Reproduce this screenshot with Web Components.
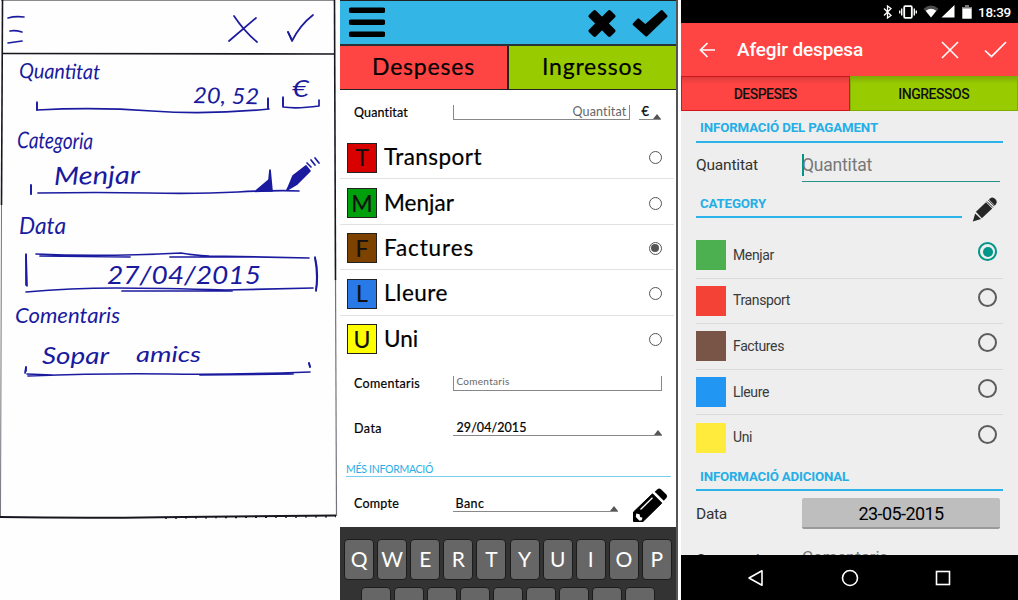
<!DOCTYPE html>
<html lang="ca"><head><meta charset="utf-8"><title>Afegir despesa</title>
<style>
body{margin:0;width:1018px;height:600px;overflow:hidden;background:#fff}
main{display:grid;grid-template-columns:340px 338px 3px 337px;height:600px}
app-screen{grid-column:4}
</style></head><body>
<main><sketch-screen></sketch-screen><mockup-screen></mockup-screen><app-screen></app-screen></main>
<script>
const define=(name,html)=>customElements.define(name,class extends HTMLElement{
  constructor(){super();this.attachShadow({mode:'open'}).innerHTML=typeof html==='string'?html:''}
  connectedCallback(){if(typeof html==='function')this.shadowRoot.innerHTML=html(this)}
});

/* Text label; "w" spreads the letters over a given width */
customElements.define('fit-label',class extends HTMLElement{
  constructor(){super();this.attachShadow({mode:'open'}).innerHTML='<style>:host{display:block;white-space:nowrap;flex:none;line-height:1.2}span{display:inline-block}</style><span><slot></slot></span>'}
  connectedCallback(){
    const s=this.shadowRoot.querySelector('span'),a=n=>this.getAttribute(n);
    if(a('size'))this.style.fontSize=a('size')+'px';
    if(a('w')){const w=+a('w');this.style.width=w+'px';const n=this.textContent.length;
      s.style.letterSpacing=((w-s.getBoundingClientRect().width)/n)+'px'}
  }
});

const icons={
 menu:[36,31,'<path d="M2 3h32M2 15h32M2 27h32" stroke="currentColor" stroke-width="5.4" stroke-linecap="round" transform="translate(0 .3)"/>'],
 bigx:[28,29,'<g fill="currentColor" transform="translate(14 14.500)"><rect x="-15.300" y="-4.900" width="30.600" height="9.800" rx="2" transform="rotate(45)"/><rect x="-15.300" y="-4.900" width="30.600" height="9.800" rx="2" transform="rotate(-45)"/></g>'],
 bigcheck:[36,28,'<path d="M2 15.200L6.300 10.600 13.300 16.800 29.800 2.300 34.200 7 14.300 26.300z" fill="currentColor" stroke="currentColor" stroke-width="2.500" stroke-linejoin="round"/>'],
 bigpencil:[36,35,'<path d="M1.500 33.500V24L20.500 5.800l9.300 9.300L11 33.500z" fill="currentColor" stroke="currentColor" stroke-linejoin="round"/><path d="M22.700 3.800l3-2.800q1.800-1 3.500.5l5.200 5q1.500 1.800 0 3.500L31.800 12.800z" fill="currentColor"/><path d="M8.500 21.500L20.500 9.800" stroke="#fff" stroke-width="1.300"/><path d="M4.300 25.500l3.200.8.700 2.600 2.300.8-.8 2.600-2.200.4L3.800 29z" fill="#fff"/>'],
 back:[17,16,'<path d="M16 8H1.500M8.500 1L1.500 8l7 7" fill="none" stroke="currentColor" stroke-width="1.700"/>'],
 close:[18,18,'<path d="M1 1l16 16M17 1L1 17" stroke="currentColor" stroke-width="1.600"/>'],
 check:[23,17,'<path d="M1 9.500l6.500 6L22 1" fill="none" stroke="currentColor" stroke-width="1.700"/>'],
 pencil:[26,26,'<g fill="#262626"><path d="M.8 24.600l2.400-8.200 5.800 5.500z"/><path d="M3.900 14.800L14 5.300l6.200 6.100L9.900 21.200z"/><path d="M18 1.600q2.500-2.300 5.300.5 2.600 2.800.6 5.100L22.800 8.400 17 2.600z"/></g><path d="M14.900 4.500l6 6M16.400 3.100l6 6" stroke="#262626" stroke-width="1"/>'],
 bt:[10,14,'<path d="M1 3.500l7 7L4.500 13V1L8 3.500l-7 7" fill="none" stroke="currentColor" stroke-width="1.300"/>'],
 vib:[18,14,'<rect x="5.200" y="1.200" width="7.600" height="11.600" rx="1" fill="none" stroke="currentColor" stroke-width="1.800"/><path d="M2.700 3.500v7M.7 5.500v3M15.300 3.500v7M17.300 5.500v3" stroke="currentColor" stroke-width="1.400"/>'],
 wifi:[16,13,'<path d="M.5 3.700Q8-2.600 15.500 3.700L8 12.500z" fill="#4c4c4c"/><path d="M2.700 5.800Q8 1.800 13.300 5.800L8 12.500z" fill="currentColor"/>'],
 signal:[14,13,'<path d="M13.500 0v12.500H.5z" fill="currentColor"/>'],
 battery:[10,14,'<path d="M3 .5h4V2h2.700v11.700H.3V2H3z" fill="currentColor"/><path d="M3 .5h4V2h2.700v1.500H.3V2H3z" fill="#777"/>'],
 navback:[17,18,'<path d="M15 1.800v14.400L2 9z" fill="none" stroke="currentColor" stroke-width="1.600" stroke-linejoin="round"/>'],
 home:[18,18,'<circle cx="9" cy="9" r="7.500" fill="none" stroke="currentColor" stroke-width="1.600"/>'],
 recent:[16,16,'<rect x="1.500" y="1.500" width="13" height="13" fill="none" stroke="currentColor" stroke-width="1.600"/>']
};
define('ui-icon',e=>{const [w,h,p]=icons[e.getAttribute('name')];return `<style>:host{display:block;flex:none;width:${w}px;height:${h}px}svg{display:block}</style><svg width="${w}" height="${h}" viewBox="0 0 ${w} ${h}">${p}</svg>`});

/* ---------- paper sketch ---------- */
define('sketch-block',e=>`<style>:host{display:block;height:${e.getAttribute('h')}px}svg{display:block;overflow:visible}
 text{font-family:Lato,"Liberation Sans",sans-serif;font-style:italic;fill:#1a1a9e;stroke:none}
 path{fill:none;stroke:#1b1ba0;stroke-width:1.700;stroke-linecap:round;stroke-linejoin:round}</style>
 <svg width="340" height="${e.getAttribute('h')}">${blocks[e.getAttribute('kind')]}</svg>`);
const hand=(x,y,size,w,t,rot=0)=>`<text x="${x}" y="${y}" font-size="${size}" textLength="${w}" lengthAdjust="spacingAndGlyphs" transform="rotate(${rot} ${x} ${y})">${t}</text>`;
const blocks={
 head:`<path d="M8 18q7-2 16-1M10 31q5-1 12 1M8 43q7-1 14-2"/><path d="M234 16q10 15 23 26M256 18L229 41M288 32l4 9Q300 25 313 15"/><path d="M288 32l4 8" stroke-width="3"/>`,
 amount:hand(19,24,21,81,'Quantitat',1)+hand(193,49,22,66,'20, 52',1)+hand(292,43,24,17,'€')+
  `<path d="M37 48v8q60-3 115 1t117-2M268 44v10M283 43v10q14 2 36-1v-6"/><path d="M37 49v7M268 45v8M283 44v8" stroke-width="2.600"/>`,
 category:hand(17,24,23,76,'Categoria',1)+hand(54,61,25,86,'Menjar',-1)+
  `<path d="M31 61v9M38 69q60-1 110 0t90-1 61-1"/><path d="M31 61v9" stroke-width="3"/>
  <path d="M256 67l13-11 1-10 2 21z" style="fill:#1b1ba0"/><path d="M288 64l5-12 13-10 4 5-13 13-10 6z" style="fill:#1b1ba0"/><path d="M307 39l4 4M311 36l4 5M315 34l4 5" stroke-width="2"/>`,
 date:hand(19,28,24,47,'Data',0)+hand(107,78,25,154,'27/04/2015',0)+
  `<path d="M26 48l1 32M36 48q65 3 145-1 12 2 28 3l100 2M170 51l83 0M40 50l90 1M26 86q45-4 90-4t110 2l87-2M122 85l110 0M315 51q4 16 1 34"/><path d="M26 49v30M315 52q3 16 1 32" stroke-width="3"/>`,
 comment:hand(15,25,22,105,'Comentaris',0)+hand(42,66,24,67,'Sopar',0)+hand(136,64,22,65,'amics',0)+
  `<path d="M26 69l-1 6M28 78q80-3 140-2t142-2M200 77l93-1M27 76l25 1M309 65l1 4"/><path d="M309 65l1 4M26 69v4" stroke-width="3"/>`
};
define('sketch-screen',`<style>:host{display:block;position:relative;height:600px;background:#fefefe}.frame{position:absolute;inset:0}</style>
<svg class="frame" width="340" height="600"><g fill="none" stroke="#171720"><path d="M1 0H334" stroke-width="1"/><path d="M2.500 0L1.500 205" stroke-width="1.600"/><path d="M1.500 205L.5 517" stroke="#74747c" stroke-width="1"/><path d="M334.500 0L335.500 280" stroke-width="1.600"/><path d="M335.500 280L336.500 516" stroke="#74747c" stroke-width="1.200"/><path d="M2 53.500L335 54" stroke-width="1.600"/><path d="M0 517Q80 518.500 160 517.300L336 515.500" stroke-width="2"/><path d="M165 518.200L336 516.700" stroke-width="1.200" stroke-dasharray="2 8"/></g></svg>
<sketch-block kind="head" h="54"></sketch-block><sketch-block kind="amount" h="70"></sketch-block><sketch-block kind="category" h="82"></sketch-block><sketch-block kind="date" h="92"></sketch-block><sketch-block kind="comment" h="100"></sketch-block>`);

/* ---------- wireframe mockup ---------- */
define('mock-field',`<style>:host{display:flex;box-sizing:border-box;height:15px;border-bottom:1px solid #888;align-items:center;flex:none;padding-left:3px;position:relative}
:host([ticks]){border-left:1px solid #888;border-right:1px solid #888}
:host([spin])::after{content:"";position:absolute;right:0;bottom:0;border:4.500px solid transparent;border-top:0;border-bottom:5px solid #555}
:host([end]){justify-content:flex-end;padding-right:2px}</style><slot></slot>`);
define('mock-row',e=>`<style>:host{display:flex;box-sizing:border-box;align-items:center;height:${e.getAttribute('h')}px;padding-left:14px}.l{width:98.500px;flex:none}</style><div class="l"><slot name="label"></slot></div><slot></slot>`);
define('mock-category',e=>`<style>:host{display:flex;box-sizing:border-box;align-items:center;height:45.400px;padding:3px 12.500px 0 7px;border-bottom:1.500px solid #e2e2e2;margin-right:2px}:host(:last-of-type){border-color:transparent}
.b{box-sizing:border-box;width:30px;height:30px;border:1px solid #222;background:${e.getAttribute('color')};display:flex;align-items:center;justify-content:center;font-size:23px;line-height:26px;padding-bottom:1px;color:#111}
.n{flex:1;padding-left:7px;margin-top:-2px}.r{box-sizing:border-box;width:13px;height:13px;border:1.200px solid #555;border-radius:50%;display:flex;align-items:center;justify-content:center}
:host([on]) .r::after{content:"";width:8px;height:8px;border-radius:50%;background:#555}</style>
<div class="b">${e.getAttribute('letter')}</div><div class="n"><slot></slot></div><div class="r"></div>`);
define('mock-keys',e=>`<style>:host{display:flex;gap:3.100px;justify-content:center}.k{box-sizing:border-box;width:30px;height:41px;border:1px solid #1c1c1c;border-radius:4px;background:#666;color:#fff;display:flex;align-items:center;justify-content:center;font-size:21px;padding-bottom:2px}</style>${(e.getAttribute('keys')||'').split(',').map(k=>`<div class="k">${k}</div>`).join('')}`);
define('mockup-screen',`<style>:host{display:block;box-sizing:border-box;height:600px;overflow:hidden;border-right:2px solid #555;background:#fff;color:#000;font-family:Lato,"Liberation Sans",sans-serif}
.bar{box-sizing:border-box;height:46px;background:#33b5e5;border-top:1px solid #222;border-bottom:2px solid #2a3338;display:flex;align-items:center;padding:0 8px 0 9px}.sp{flex:1}
.tabs{box-sizing:border-box;height:44px;display:grid;grid-template-columns:169px 1fr;border-bottom:1px solid #222}.tabs>div{display:flex;align-items:center;justify-content:center;padding-bottom:1px}.d{background:#f44;border-right:2px solid #222}.i{background:#9c0}
.list{height:227px}.list,.tabs,.row{-webkit-text-stroke:.2px}.sec{box-sizing:border-box;height:26px;margin:0 5px 0 6px;border-bottom:1.500px solid #79cdef;color:#27aee5;display:flex;align-items:flex-end}
.kb{background:#333;height:73px;box-sizing:border-box;padding-top:12px;display:grid;gap:7px;align-content:start}.g{color:#666;-webkit-text-stroke:0}.e{margin-left:9px}.lo{margin-top:5px}.p{margin:6px 0 0 14px}</style>
<div class="bar"><ui-icon name="menu"></ui-icon><span class="sp"></span><ui-icon name="bigx" style="margin-top:2px"></ui-icon><ui-icon name="bigcheck" style="margin-left:16px"></ui-icon></div>
<div class="tabs"><div class="d"><fit-label size="23" w="103">Despeses</fit-label></div><div class="i"><fit-label size="23" w="101">Ingressos</fit-label></div></div>
<mock-row class="row" h="44"><fit-label slot="label" size="12.500" w="54">Quantitat</fit-label><mock-field ticks end style="width:177px"><fit-label class="g" size="12.500" w="54">Quantitat</fit-label></mock-field><mock-field class="e" spin style="width:22px"><fit-label size="13">€</fit-label></mock-field></mock-row>
<div class="list"><mock-category letter="T" color="#d90000"><fit-label size="22.500" w="98">Transport</fit-label></mock-category><mock-category letter="M" color="#00a00c"><fit-label size="22.500" w="70">Menjar</fit-label></mock-category><mock-category on letter="F" color="#7d4100"><fit-label size="22.500" w="90">Factures</fit-label></mock-category><mock-category letter="L" color="#2979e6"><fit-label size="22.500" w="64">Lleure</fit-label></mock-category><mock-category letter="U" color="#ff0"><fit-label size="22.500" w="34">Uni</fit-label></mock-category></div>
<mock-row class="row" h="45"><fit-label slot="label" size="12.500" w="66">Comentaris</fit-label><mock-field ticks style="width:209px"><fit-label class="g" size="10" w="53" style="margin-top:-4px">Comentaris</fit-label></mock-field></mock-row>
<mock-row class="row" h="45"><fit-label slot="label" size="12.500" w="28">Data</fit-label><mock-field spin style="width:209px"><fit-label size="12.500" w="70" style="margin:-2px 0 0 1px">29/04/2015</fit-label></mock-field></mock-row>
<div class="sec"><fit-label size="10.500" w="87">MÉS INFORMACIÓ</fit-label></div>
<mock-row class="row" h="50"><fit-label slot="label" size="12.500" w="45" style="margin-top:3px">Compte</fit-label><mock-field class="lo" spin style="width:165px"><fit-label size="12.500" w="29" style="margin-top:-2px">Banc</fit-label></mock-field><ui-icon class="p" name="bigpencil"></ui-icon></mock-row>
<div class="kb"><mock-keys keys="Q,W,E,R,T,Y,U,I,O,P"></mock-keys><mock-keys keys=",,,,,,,,"></mock-keys></div>`);

/* ---------- final application ---------- */
define('app-section',`<style>:host{display:flex;box-sizing:border-box;align-items:center;border-bottom:2px solid #2bb3ea;color:#25aee6;font-weight:700;padding:4px 0 0 4px}</style><slot></slot>`);
define('app-category',e=>`<style>:host{display:flex;box-sizing:border-box;height:45.600px;align-items:center;border-bottom:1.500px solid #dadada}:host(:last-of-type){border-color:transparent}.c{width:30px;height:30px;background:${e.getAttribute('color')}}.n{flex:1;padding-left:7px;color:#3a3a3a}
.r{box-sizing:border-box;width:19px;height:19px;border:2px solid #5c5c5c;border-radius:50%;margin:-7px 6px 0 0;display:flex;align-items:center;justify-content:center}:host([on]) .r{border-color:#009688}:host([on]) .r::after{content:"";width:10px;height:10px;border-radius:50%;background:#009688}</style><div class="c"></div><div class="n"><slot></slot></div><div class="r"></div>`);
define('app-row',e=>`<style>:host{display:flex;align-items:center;height:${e.getAttribute('h')}px;color:#333}.l{width:106px;flex:none}</style><div class="l"><slot name="label"></slot></div><slot></slot>`);
define('app-screen',`<style>:host{display:flex;flex-direction:column;height:600px;overflow:hidden;background:#eee;font-family:Roboto,"Liberation Sans",sans-serif}
.st{height:23px;background:#000;color:#fff;display:flex;align-items:center;justify-content:flex-end;padding-right:7px}.hd{height:53px;background:#f44;color:#fff;display:flex;align-items:center;padding:0 11px 0 18px;font-weight:500}.sp{flex:1}
.tabs{display:grid;grid-template-columns:1fr 1fr;height:35px;font-weight:500;color:#111}.tabs div{box-sizing:border-box;display:flex;align-items:center;justify-content:center;padding-top:1px}.d{border:1px solid #d2171b;background:linear-gradient(#dd3d3d,#f44 7px)}.i{border:1px solid #7fae00;background:linear-gradient(#84ad05,#9c0 7px)}
.body{height:444px;overflow:hidden;padding:0 15px}.nav{height:45px;background:#000;color:#fff;display:flex;align-items:center}
.in{box-sizing:border-box;width:198px;height:33px;border-bottom:1.500px solid #26928a;display:flex;align-items:center;color:#777}.in i{width:1.500px;height:22px;background:#009688;margin-right:-1.500px}
.cat{display:flex;height:30px;margin-bottom:15px}.btn{box-sizing:border-box;width:198px;height:31px;background:#bebebe;border-bottom:2px solid #999;border-radius:2px;display:flex;align-items:center;justify-content:center;color:#000}.btn fit-label{margin-top:3px}.list{height:228px}</style>
<div class="st"><ui-icon name="bt"></ui-icon><ui-icon name="vib" style="margin-left:6px"></ui-icon><ui-icon name="wifi" style="margin-left:6px"></ui-icon><ui-icon name="signal" style="margin-left:2px"></ui-icon><ui-icon name="battery" style="margin:0 6px 0 7px"></ui-icon><fit-label size="13.500" w="33" style="font-weight:500;margin-top:1px">18:39</fit-label></div>
<div class="hd"><ui-icon name="back"></ui-icon><fit-label size="19" w="126" style="margin:2px 0 0 21px">Afegir despesa</fit-label><span class="sp"></span><ui-icon name="close"></ui-icon><ui-icon name="check" style="margin-left:25px"></ui-icon></div>
<div class="tabs"><div class="d"><fit-label size="14" w="63">DESPESES</fit-label></div><div class="i"><fit-label size="14" w="71">INGRESSOS</fit-label></div></div>
<div class="body"><app-section style="height:32px"><fit-label size="13.300" w="178">INFORMACIÓ DEL PAGAMENT</fit-label></app-section>
<app-row h="45"><fit-label slot="label" size="15.500" w="62">Quantitat</fit-label><div class="in"><i></i><fit-label size="17.500" w="70">Quantitat</fit-label></div></app-row>
<div class="cat"><app-section style="width:266px"><fit-label size="13.300" w="66">CATEGORY</fit-label></app-section><ui-icon name="pencil" style="margin:9px 0 0 10px"></ui-icon></div>
<div class="list"><app-category on color="#4caf50"><fit-label size="14" w="41">Menjar</fit-label></app-category><app-category color="#f44336"><fit-label size="14" w="57">Transport</fit-label></app-category><app-category color="#795548"><fit-label size="14" w="51">Factures</fit-label></app-category><app-category color="#2196f3"><fit-label size="14" w="36">Lleure</fit-label></app-category><app-category color="#ffeb3b"><fit-label size="14" w="19">Uni</fit-label></app-category></div>
<app-section style="height:30px"><fit-label size="13.300" w="149">INFORMACIÓ ADICIONAL</fit-label></app-section>
<app-row h="44"><fit-label slot="label" size="15.500" w="31" style="margin-top:2px">Data</fit-label><div class="btn"><fit-label size="18" w="85">23-05-2015</fit-label></div></app-row>
<app-row h="44"><fit-label slot="label" size="15" w="70" style="margin-top:5px">Comentaris</fit-label><fit-label size="17" w="86" style="color:#777">Comentaris</fit-label></app-row></div>
<div class="nav"><ui-icon name="navback" style="margin-left:66px"></ui-icon><ui-icon name="home" style="margin-left:76.500px"></ui-icon><ui-icon name="recent" style="margin-left:76.500px"></ui-icon></div>`);
</script></body></html>
